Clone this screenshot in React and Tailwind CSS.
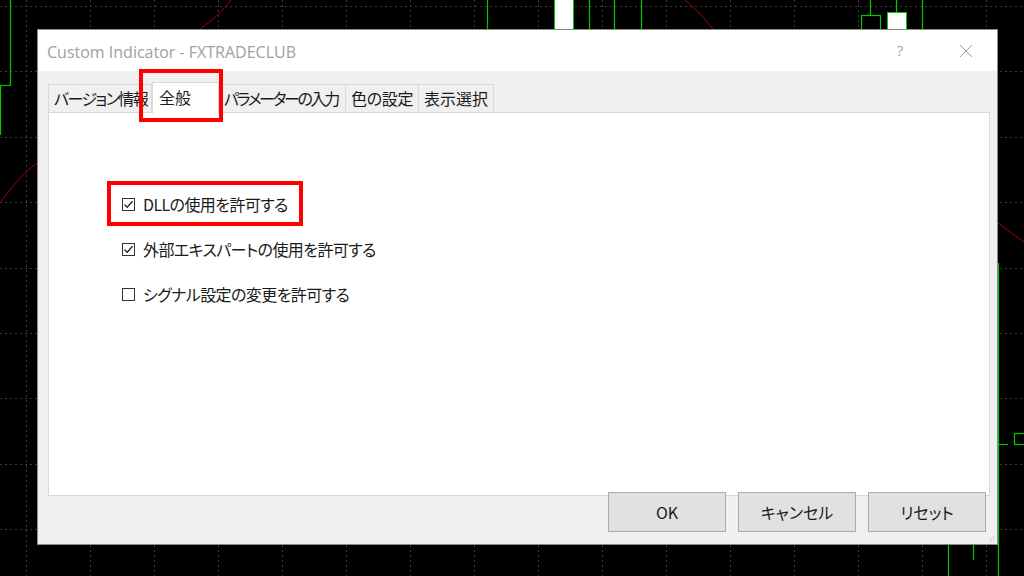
import React from "react";

const JP = "font-['Segoe_UI','Noto_Sans_CJK_JP',sans-serif] [font-feature-settings:'palt']";

function Chart() {
  const vx = Array.from({ length: 17 }, (_, k) => 26 + 64 * k);
  const hy = Array.from({ length: 9 }, (_, k) => 6 + 65.4 * k);
  const g = "#00c800";
  const r = "#a80000";
  return (
    <svg className="absolute inset-0" width="1024" height="576" viewBox="0 0 1024 576">
      {vx.map((x) => (
        <line key={"v" + x} x1={x + 0.5} y1="0" x2={x + 0.5} y2="576" stroke="#3a3a3a" strokeDasharray="2 3" />
      ))}
      {hy.map((y) => (
        <line key={"h" + y} x1="0" y1={Math.round(y) + 0.5} x2="1024" y2={Math.round(y) + 0.5} stroke="#3a3a3a" strokeDasharray="2 3" />
      ))}
      <g stroke={g} strokeWidth="1.2" fill="none">
        <path d="M10.5 0V85.5H0.5V135" />
        <line x1="487.5" y1="0" x2="487.5" y2="30" />
        <line x1="589.5" y1="0" x2="589.5" y2="30" />
        <line x1="614.5" y1="0" x2="614.5" y2="30" />
        <line x1="641.5" y1="0" x2="641.5" y2="30" />
        <line x1="870.5" y1="0" x2="870.5" y2="15" />
        <rect x="861.5" y="15.5" width="19" height="20" fill="#000" />
        <line x1="896.5" y1="0" x2="896.5" y2="12" />
        <line x1="922.5" y1="0" x2="922.5" y2="30" />
        <line x1="998.5" y1="263" x2="998.5" y2="576" />
        <line x1="998" y1="444.5" x2="1008" y2="444.5" />
        <rect x="1014.5" y="433.5" width="14" height="11" />
        <line x1="948.5" y1="544" x2="948.5" y2="576" />
        <line x1="973.5" y1="545" x2="973.5" y2="560" />
      </g>
      <rect x="554.5" y="-2" width="19" height="34" fill="#fff" stroke={g} />
      <rect x="887.5" y="12.5" width="19" height="22" fill="#fff" stroke={g} />
      <g stroke={r} strokeWidth="1" fill="none">
        <path d="M231 0 Q220 15 199 30" />
        <path d="M38 162 Q20 175 0 203" />
        <path d="M685 0 Q700 12 714 30" />
        <path d="M998 223 L1024 242" />
      </g>
    </svg>
  );
}

function Check({ checked }) {
  return (
    <span className="w-[13px] h-[13px] border border-[#333333] bg-white flex items-center justify-center shrink-0">
      {checked && (
        <svg width="11" height="11" viewBox="0 0 11 11">
          <path d="M1.5 5.5 L4.2 8.3 L9.5 2.2" stroke="#222" strokeWidth="1.3" fill="none" />
        </svg>
      )}
    </span>
  );
}

function Row({ checked, label }) {
  return (
    <div className="flex items-center gap-[8px] h-[20px]">
      <Check checked={checked} />
      <span className={`${JP} text-[16px] tracking-[-0.6px] text-[#1a1a1a] leading-none whitespace-nowrap`}>{label}</span>
    </div>
  );
}

function Tab({ label, w, selected, tr }) {
  return selected ? (
    <div
      className={`${JP} h-[31px] -mb-px bg-white border border-b-0 border-[#d9d9d9] text-[16px] text-[#1a1a1a] pl-[6px] pt-[4px] leading-[20px] relative z-10 whitespace-nowrap`}
      style={{ width: w }}
    >
      {label}
    </div>
  ) : (
    <div
      className={`${JP} ${tr} h-[28px] bg-[#f0f0f0] border border-b-0 border-[#d9d9d9] -ml-px text-[16px] text-[#1a1a1a] pl-[5px] pt-[3px] leading-[20px] whitespace-nowrap`}
      style={{ width: w }}
    >
      {label}
    </div>
  );
}

function Btn({ children }) {
  return (
    <div className={`${JP} w-[118px] h-[40px] bg-[#e1e1e1] border border-[#adadad] flex items-center justify-center text-[16px] text-[#1a1a1a]`}>
      {children}
    </div>
  );
}

export default function App() {
  return (
    <div className="relative w-[1024px] h-[576px] bg-black overflow-hidden">
      <Chart />
      <div className="absolute left-[37px] top-[29px] w-[961px] h-[516px] border border-[#8a8a8a] bg-[#f0f0f0] flex flex-col">
        <div className="h-[41px] bg-white flex items-center pl-[9px] shrink-0">
          <span className="font-['Segoe_UI','Open_Sans',sans-serif] text-[16px] text-[#a0a0a0] flex-1 pt-[2px]">
            Custom Indicator - FXTRADECLUB
          </span>
          <span className="font-['Open_Sans',sans-serif] text-[15px] text-[#a8a8a8] w-[20px] text-center mr-[49px]">?</span>
          <svg width="14" height="14" viewBox="0 0 14 14" className="mr-[24px]">
            <path d="M1 1 L13 13 M13 1 L1 13" stroke="#9a9a9a" strokeWidth="1" />
          </svg>
        </div>
        <div className="flex-1 flex flex-col pl-[10px] pr-[7px] pt-[11px]">
          <div className="flex items-end h-[30px] pl-[1px]">
            <Tab label="バージョン情報" w={104} tr="tracking-[-1.6px]" />
            <Tab label="全般" w={67} selected />
            <Tab label="パラメーターの入力" w={128} tr="tracking-[-2.4px]" />
            <Tab label="色の設定" w={74} tr="tracking-[-0.3px]" />
            <Tab label="表示選択" w={76} tr="tracking-[0px]" />
          </div>
          <div className="h-[384px] bg-white border border-[#d9d9d9] pl-[73px] pt-[81px] flex flex-col gap-[25px]">
            <Row checked label="DLLの使用を許可する" />
            <Row checked label="外部エキスパートの使用を許可する" />
            <Row label="シグナル設定の変更を許可する" />
          </div>
          <div className="flex justify-end gap-[12px] pr-[4px] -mt-[4px]">
            <Btn>OK</Btn>
            <Btn>キャンセル</Btn>
            <Btn>リセット</Btn>
          </div>
        </div>
        <svg className="absolute right-[2px] bottom-[2px]" width="6" height="6" viewBox="0 0 6 6">
          <rect x="4" y="0" width="1" height="1" fill="#bbb" />
          <rect x="2" y="2" width="1" height="1" fill="#bbb" />
          <rect x="4" y="2" width="1" height="1" fill="#bbb" />
          <rect x="0" y="4" width="1" height="1" fill="#bbb" />
          <rect x="2" y="4" width="1" height="1" fill="#bbb" />
          <rect x="4" y="4" width="1" height="1" fill="#bbb" />
        </svg>
      </div>
      <div className="absolute left-[139px] top-[69px] w-[84px] h-[53px] border-[4px] border-[#ff0000]" />
      <div className="absolute left-[107px] top-[181px] w-[196px] h-[45px] border-[4px] border-[#ff0000]" />
    </div>
  );
}
